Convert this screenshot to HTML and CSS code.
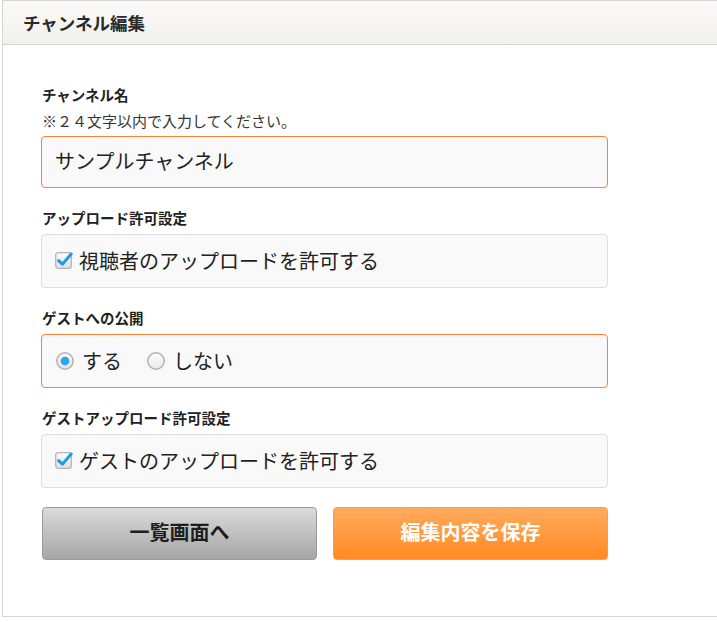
FILE: index.html
```html
<!DOCTYPE html>
<html lang="ja">
<head>
<meta charset="utf-8">
<title>チャンネル編集</title>
<link rel="stylesheet" href="styles.css">
</head>
<body>
<div class="panel">
  <div class="panel-head"><h1 class="title">チャンネル編集</h1></div>
  <div class="panel-body">
    <div class="field">
      <div class="label">チャンネル名</div>
      <div class="note">※２４文字以内で入力してください。</div>
      <div class="box box-active text-input">サンプルチャンネル</div>
    </div>
    <div class="field">
      <div class="label">アップロード許可設定</div>
      <div class="box">
        <span class="opt">
          <svg class="check" viewBox="0 0 18 18"><defs><linearGradient id="cg1" x1="0" y1="0" x2="0" y2="1"><stop offset="0" stop-color="#fdfdfd"/><stop offset="1" stop-color="#e0e0e0"/></linearGradient></defs><rect x="0.7" y="1.7" width="15.6" height="15.6" rx="2.5" fill="url(#cg1)" stroke="#b5b5b5" stroke-width="1.3"/><path d="M3.6 9.6 L7.4 13.2 L16.2 3" fill="none" stroke="#1f9de8" stroke-width="3" stroke-linecap="round" stroke-linejoin="round"/></svg>
          <span>視聴者のアップロードを許可する</span>
        </span>
      </div>
    </div>
    <div class="field">
      <div class="label">ゲストへの公開</div>
      <div class="box box-active">
        <span class="opt">
          <svg class="radio" viewBox="0 0 18 18"><defs><linearGradient id="rg1" x1="0" y1="0" x2="0" y2="1"><stop offset="0" stop-color="#fafafa"/><stop offset="1" stop-color="#e2e2e2"/></linearGradient></defs><circle cx="9" cy="9" r="8.2" fill="url(#rg1)" stroke="#b0b0b0" stroke-width="1.4"/><circle cx="9" cy="9" r="4.3" fill="#28a4ec"/></svg>
          <span>する</span>
        </span>
        <span class="opt opt-gap">
          <svg class="radio" viewBox="0 0 18 18"><defs><linearGradient id="rg2" x1="0" y1="0" x2="0" y2="1"><stop offset="0" stop-color="#fdfdfd"/><stop offset="1" stop-color="#e8e8e8"/></linearGradient></defs><circle cx="9" cy="9" r="8.2" fill="url(#rg2)" stroke="#b0b0b0" stroke-width="1.4"/></svg>
          <span>しない</span>
        </span>
      </div>
    </div>
    <div class="field">
      <div class="label">ゲストアップロード許可設定</div>
      <div class="box">
        <span class="opt">
          <svg class="check" viewBox="0 0 18 18"><defs><linearGradient id="cg2" x1="0" y1="0" x2="0" y2="1"><stop offset="0" stop-color="#fdfdfd"/><stop offset="1" stop-color="#e0e0e0"/></linearGradient></defs><rect x="0.7" y="1.7" width="15.6" height="15.6" rx="2.5" fill="url(#cg2)" stroke="#b5b5b5" stroke-width="1.3"/><path d="M3.6 9.6 L7.4 13.2 L16.2 3" fill="none" stroke="#1f9de8" stroke-width="3" stroke-linecap="round" stroke-linejoin="round"/></svg>
          <span>ゲストのアップロードを許可する</span>
        </span>
      </div>
    </div>
    <div class="buttons">
      <button class="btn btn-grey" type="button">一覧画面へ</button>
      <button class="btn btn-orange" type="button">編集内容を保存</button>
    </div>
  </div>
</div>
</body>
</html>
```
FILE: styles.css
```css
html, body {
  margin: 0;
  padding: 0;
  overflow: hidden;
  background: #fff;
}
body {
  font-family: "Noto Sans CJK JP", "Noto Sans", sans-serif;
  color: #222;
}
.panel {
  margin-left: 2px;
  width: 740px;
  border: 1px solid #d6d6d6;
  box-sizing: border-box;
  background: #fff;
}
.panel-head {
  height: 43px;
  border-bottom: 1px solid #d4d4d4;
  background: linear-gradient(#fbfaf8, #f1f0ec);
  display: flex;
  align-items: center;
  padding-left: 20px;
}
.title {
  margin: 0;
  font-size: 17.5px;
  font-weight: bold;
  color: #2a2a2a;
  line-height: 20px;
}
.panel-body {
  padding: 40px 0 56px 38px;
}
.field {
  width: 567px;
  margin-bottom: 20px;
}
.field:nth-child(4) {
  margin-bottom: 19px;
}
.label {
  padding-left: 1px;
  font-size: 14.5px;
  font-weight: bold;
  line-height: 20px;
  color: #222;
  margin-bottom: 6px;
}
.note {
  padding-left: 1px;
  font-size: 15px;
  line-height: 20px;
  color: #333;
  margin-top: 0;
  margin-bottom: 5px;
}
.box {
  box-sizing: border-box;
  height: 54px;
  border: 1px solid #dedede;
  border-radius: 4px;
  background: #f9f9f9;
  display: flex;
  align-items: center;
  padding-left: 13px;
  padding-bottom: 1px;
  font-size: 20px;
  color: #222;
}
.box-active {
  border-color: #ff7f3a;
}
.text-input {
  height: 52px;
  padding-left: 13px;
  padding-bottom: 3px;
}
.opt {
  display: inline-flex;
  align-items: center;
  line-height: 24px;
}
.check {
  width: 18px;
  height: 18px;
  flex-shrink: 0;
  margin-right: 6px;
  margin-top: -2px;
}
.radio {
  width: 18px;
  height: 18px;
  flex-shrink: 0;
  margin-left: 1px;
  margin-right: 8px;
}
.opt-gap {
  margin-left: 24px;
}
.buttons {
  display: flex;
  gap: 16px;
  padding-left: 1px;
  width: 566px;
}
.btn {
  flex: 1;
  height: 53px;
  border-radius: 4px;
  font-family: "Noto Sans CJK JP", "Noto Sans", sans-serif;
  font-size: 20px;
  font-weight: bold;
  cursor: pointer;
  padding: 0 0 4px 0;
}
.btn-grey {
  border: 1px solid #9a9a9a;
  background: linear-gradient(#dadada, #a6a6a6);
  color: #1e1e1e;
}
.btn-orange {
  border: 1px solid #ff9a45;
  background: linear-gradient(#ffab5e, #ff8a22);
  color: #fff;
}
```
